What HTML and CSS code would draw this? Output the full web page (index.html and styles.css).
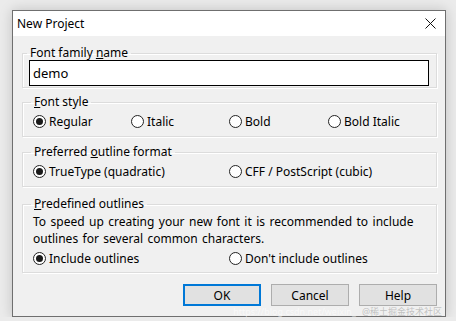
FILE: index.html
```html
<!DOCTYPE html>
<html lang="en">

<head>
    <meta charset="UTF-8">
    <meta name="viewport" content="width=device-width, initial-scale=1.0">
    <title>New Project</title>
    <link rel="stylesheet" href="styles.css">
</head>

<body>
    <div class="dialog">
        <div class="titlebar">
            <span class="title">New Project</span>
            <svg class="close" width="11" height="11" viewBox="0 0 11 11">
                <path d="M0.5 0.5 L10.5 10.5 M10.5 0.5 L0.5 10.5" stroke="#111" stroke-width="1" fill="none" />
            </svg>
        </div>
        <div class="body">
            <fieldset class="group group-name">
                <legend>Font family <u>n</u>ame</legend>
                <div class="name-input">demo</div>
            </fieldset>

            <fieldset class="group group-style">
                <legend><u>F</u>ont style</legend>
                <div class="options four">
                    <label class="radio"><span class="dot checked"></span>Regular</label>
                    <label class="radio"><span class="dot"></span>Italic</label>
                    <label class="radio"><span class="dot"></span>Bold</label>
                    <label class="radio"><span class="dot"></span>Bold Italic</label>
                </div>
            </fieldset>

            <fieldset class="group group-format">
                <legend>Preferred <u>o</u>utline format</legend>
                <div class="options two">
                    <label class="radio"><span class="dot checked"></span>TrueType (quadratic)</label>
                    <label class="radio"><span class="dot"></span>CFF / PostScript (cubic)</label>
                </div>
            </fieldset>

            <fieldset class="group group-outlines">
                <legend><u>P</u>redefined outlines</legend>
                <p class="note">To speed up creating your new font it is recommended to include outlines for several common characters.</p>
                <div class="options two">
                    <label class="radio"><span class="dot checked"></span>Include outlines</label>
                    <label class="radio"><span class="dot"></span>Don't include outlines</label>
                </div>
            </fieldset>

            <div class="buttons">
                <button class="btn default">OK</button>
                <button class="btn">Cancel</button>
                <button class="btn">Help</button>
            </div>
        </div>
        <div class="watermark">
            <span class="wm-url">https://blog.csdn.net/weixin_</span>
            <span class="wm-site">@稀土掘金技术社区</span>
        </div>
    </div>
</body>

</html>
```

FILE: styles.css
```css
body {
    margin: 0;
    background: #ebebeb;
    font-family: "Noto Sans", "Noto Sans CJK SC", sans-serif;
    font-size: 12px;
    color: #000;
}

.dialog {
    position: relative;
    width: 432px;
    height: 305px;
    margin: 10px 0 0 12px;
    border: 1px solid #6f6f6f;
    background: #f0f0f0;
    box-shadow: 0 0 12px rgba(0, 0, 0, 0.18);
}

.titlebar {
    height: 25px;
    background: #fff;
    display: flex;
    align-items: center;
    justify-content: space-between;
    padding: 0 9px 0 4px;
}

.title {
    font-size: 12px;
}

.close {
    display: block;
}

.body {
    padding: 10px 8px 0 9px;
    display: flex;
    flex-direction: column;
}

.group {
    margin: 0;
    padding: 0 10px;
    border: 1px solid #dcdcdc;
    box-shadow: inset 1px 1px 0 #fff, 1px 1px 0 #fff;
    min-width: 0;
}

.group legend {
    padding: 0 3px;
    margin-left: -2px;
    line-height: 14px;
}

.group-name {
    padding: 0 7px 1px 6px;
}

.name-input {
    height: 24px;
    border: 1px solid #000;
    background: #fff;
    padding: 0 3px;
    line-height: 24px;
    font-size: 13px;
}

.group-style {
    margin-top: 7px;
    padding-top: 3px;
    padding-bottom: 6px;
}

.group-format {
    margin-top: 8px;
    padding-top: 3px;
    padding-bottom: 6px;
}

.group-outlines {
    margin-top: 10px;
    padding-top: 2px;
    padding-bottom: 5px;
}

.note {
    margin: 0 0 2px;
    line-height: 17px;
    word-spacing: 1.3px;
}

.options {
    display: grid;
}

.options.four {
    grid-template-columns: 98px 98px 99px 1fr;
}

.options.two {
    grid-template-columns: 196px 1fr;
}

.radio {
    display: flex;
    align-items: center;
    gap: 3px;
    height: 18px;
}

.dot {
    width: 11px;
    height: 11px;
    border: 1px solid #222;
    border-radius: 50%;
    background: #fff;
    display: grid;
    place-items: center;
}

.dot.checked::after {
    content: "";
    width: 7px;
    height: 7px;
    border-radius: 50%;
    background: #1a1a1a;
}

.buttons {
    display: flex;
    justify-content: flex-end;
    gap: 10px;
    margin-top: 11px;
}

.btn {
    width: 78px;
    height: 22px;
    border: 1px solid #adadad;
    background: #e1e1e1;
    font-family: inherit;
    font-size: 12px;
    color: #000;
    padding: 0;
}

.btn.default {
    border: 2px solid #0078d7;
}

.watermark {
    position: absolute;
    right: 3px;
    bottom: 0;
    display: flex;
    align-items: baseline;
    gap: 6px;
    pointer-events: none;
    line-height: 9px;
}

.wm-url {
    color: rgba(255, 255, 255, 0.6);
    font-size: 9px;
}

.wm-site {
    color: rgba(120, 120, 120, 0.4);
    font-size: 9px;
}
```
